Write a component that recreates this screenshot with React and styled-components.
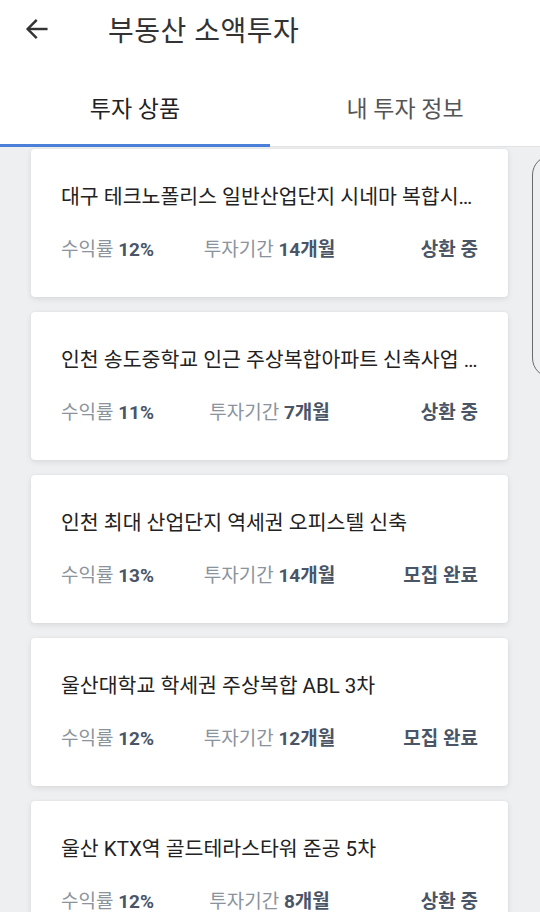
import React from "react";
import styled, { createGlobalStyle } from "styled-components";

const Global = createGlobalStyle`
  html, body { margin: 0; padding: 0; background: #eeeff1; overflow: hidden; }
  body { font-family: Roboto, "Noto Sans CJK KR", sans-serif; }
  * { box-sizing: border-box; }
`;

const Screen = styled.div`
  width: 540px;
  height: 912px;
  position: relative;
  overflow: hidden;
  background: #eeeff1;
  display: flex;
  flex-direction: column;
  & > * { flex-shrink: 0; }
`;

const Header = styled.header`
  height: 58px;
  background: #fff;
  display: flex;
  align-items: center;
  padding-left: 22px;
  gap: 56px;
`;

const BackButton = styled.button`
  border: 0;
  background: none;
  padding: 0;
  width: 30px;
  height: 30px;
  display: flex;
  align-items: center;
  justify-content: center;
  color: #333;
`;

const Title = styled.h1`
  margin: 0;
  font-size: 28px;
  font-weight: 400;
  color: #333;
  letter-spacing: 0.5px;
`;

const Tabs = styled.nav`
  display: flex;
  background: #fff;
  height: 89px;
  border-bottom: 1px solid #e2e2e2;
`;

const Tab = styled.div`
  flex: 1;
  display: flex;
  align-items: center;
  justify-content: center;
  padding-top: 11px;
  font-size: 23px;
  color: ${(p) => (p.$active ? "#222" : "#555")};
  border-bottom: 3px solid ${(p) => (p.$active ? "#4a80d8" : "transparent")};
  margin-bottom: -1px;
`;

const List = styled.div`
  display: flex;
  flex-direction: column;
  gap: 15px;
  padding: 2px 32px 0 31px;
  & > * { flex-shrink: 0; }
`;

const Card = styled.div`
  background: #fff;
  border-radius: 4px;
  height: 148px;
  padding: 0 30px;
  display: flex;
  flex-direction: column;
  justify-content: center;
  gap: 28px;
  box-shadow: 0 2px 6px rgba(0, 0, 0, 0.09), 0 0 2px rgba(0, 0, 0, 0.05);
`;

const CardTitle = styled.div`
  font-size: 20.5px;
  color: #222;
  white-space: nowrap;
  overflow: hidden;
  text-overflow: ellipsis;
  line-height: 26px;
`;

const Meta = styled.div`
  display: grid;
  grid-template-columns: 1fr auto 1fr;
  align-items: center;
  font-size: 19px;
  line-height: 24px;
`;

const MetaItem = styled.div`
  color: #8b939d;
  text-align: ${(p) => p.$align};
  white-space: nowrap;
  b {
    color: #4a5566;
    font-weight: 700;
  }
`;

const Status = styled.div`
  text-align: right;
  color: #4a5566;
  font-weight: 700;
  font-size: 19px;
`;

const EdgeGlow = styled.div`
  position: absolute;
  left: 532px;
  top: 155px;
  width: 40px;
  height: 223px;
  border: 1.5px solid #6a6a6a;
  border-radius: 22px;
`;

const items = [
  { title: "대구 테크노폴리스 일반산업단지 시네마 복합시설 신축사업", rate: "12%", period: "14개월", status: "상환 중" },
  { title: "인천 송도중학교 인근 주상복합아파트 신축사업 2차", rate: "11%", period: "7개월", status: "상환 중" },
  { title: "인천 최대 산업단지 역세권 오피스텔 신축", rate: "13%", period: "14개월", status: "모집 완료" },
  { title: "울산대학교 학세권 주상복합 ABL 3차", rate: "12%", period: "12개월", status: "모집 완료" },
  { title: "울산 KTX역 골드테라스타워 준공 5차", rate: "12%", period: "8개월", status: "상환 중" },
];

export default function App() {
  return (
    <Screen>
      <Global />
      <Header>
        <BackButton aria-label="back">
          <svg width="28" height="28" viewBox="0 0 24 24" fill="none" stroke="#333" strokeWidth="2.1" strokeLinecap="square">
            <path d="M20 12H5" />
            <path d="M11 5l-7 7 7 7" />
          </svg>
        </BackButton>
        <Title>부동산 소액투자</Title>
      </Header>
      <Tabs>
        <Tab $active>투자 상품</Tab>
        <Tab>내 투자 정보</Tab>
      </Tabs>
      <List>
        {items.map((it, i) => (
          <Card key={i}>
            <CardTitle>{it.title}</CardTitle>
            <Meta>
              <MetaItem $align="left">
                수익률 <b>{it.rate}</b>
              </MetaItem>
              <MetaItem $align="center">
                투자기간 <b>{it.period}</b>
              </MetaItem>
              <Status>{it.status}</Status>
            </Meta>
          </Card>
        ))}
      </List>
      <EdgeGlow />
    </Screen>
  );
}
